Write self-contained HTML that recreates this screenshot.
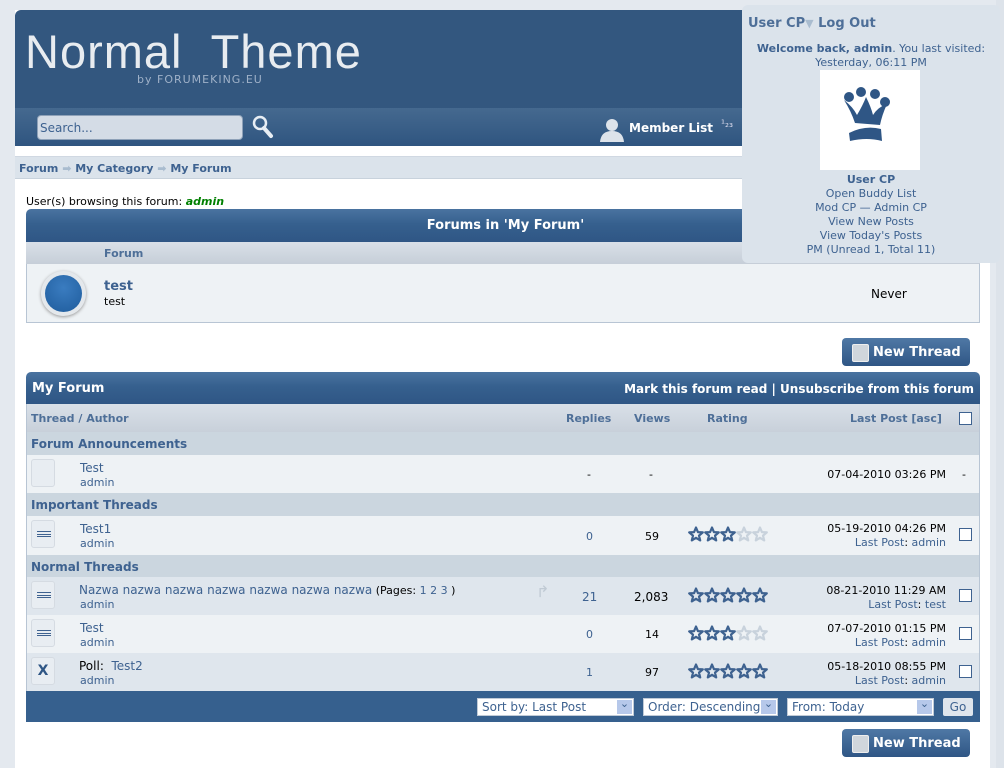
<!DOCTYPE html>
<html style="overflow:hidden;width:1004px;height:768px"><head><meta charset="utf-8"><style>
*{box-sizing:border-box;margin:0;padding:0}
body{width:1004px;height:768px;overflow:hidden;background:#e4e9ef;font-family:Verdana,"DejaVu Sans",sans-serif;font-size:11px;color:#000;position:relative}
.a{position:absolute}
.lnk{color:#3e6290}
.b{font-weight:bold}
.hdr{background:linear-gradient(#4a73a0,#36608e 45%,#2f5685);color:#fff;font-weight:bold;font-size:13px}
.cb{width:13px;height:13px;border:1px solid #3e6290;background:#fff}
.icon{width:24px;height:28px;border:1px solid #d5dbe2;border-radius:3px;background:#e8edf2}
.lines{position:absolute;left:5px;top:10px;width:14px;height:6px;border-top:1px solid #3e6290;border-bottom:1px solid #3e6290}
.lines:after{content:"";position:absolute;left:0;top:2px;width:14px;border-top:1px solid #3e6290}
.btn{width:128px;height:28px;border-radius:4px;background:linear-gradient(#4f78a5,#2f5685);color:#fff;font-weight:bold;font-size:13px;line-height:28px;padding-left:31px}
.btn:before{content:"";position:absolute;left:10px;top:6px;width:15px;height:16px;border-radius:2px;background:#d0d6dc;border:1px solid #eee}
.sel{height:18px;background:#fff;border:1px solid #c0cad6;color:#3e6290;font-size:12px;line-height:16px;padding-left:4px}
.sel:after{content:"⌄";position:absolute;right:1px;top:1px;width:15px;height:14px;background:#b6c8ea;color:#3e6290;font-size:11px;line-height:8px;text-align:center}
</style></head><body>
<svg width="0" height="0" style="position:absolute"><defs><path id="st" d="M8 1.5 L9.9 6.1 L14.8 6.4 L11 9.6 L12.2 14.4 L8 11.8 L3.8 14.4 L5 9.6 L1.2 6.4 L6.1 6.1Z" fill="none" stroke-width="2.2" stroke-linejoin="round"/></defs></svg>
<div class="a" style="left:10px;top:5px;width:986px;height:763px;background:#e4e9ef;border-radius:8px"></div>
<div class="a" style="left:15px;top:10px;width:975px;height:758px;background:#fff"></div>
<div class="a" style="left:996px;top:0;width:8px;height:768px;background:#dde3ea"></div>
<div class="a" style="left:15px;top:10px;width:975px;height:98px;background:#33577f;border-radius:6px 6px 0 0"></div>
<div class="a" style="left:25px;top:26px;font-family:'Liberation Sans',sans-serif;font-size:47px;color:#e8ecf0;letter-spacing:1px;line-height:52px">Normal&nbsp;&nbsp;Theme</div>
<div class="a" style="left:137px;top:73px;font-size:11px;color:#9fb1c8;letter-spacing:1px">by FORUMEKING.EU</div>
<div class="a" style="left:15px;top:108px;width:975px;height:38px;background:linear-gradient(#45698f,#2f5580)"></div>
<div class="a" style="left:37px;top:115px;width:206px;height:25px;border-radius:4px;background:#d4dce6;border:1px solid #8ea1b8;color:#3e6290;font-size:12px;padding:5px 0 0 2px">Search...</div>
<svg class="a" style="left:252px;top:114px" width="22" height="26"><circle cx="8" cy="9" r="6" fill="none" stroke="#e8eef4" stroke-width="2.5"/><path d="M12 14 L19 22" stroke="#e8eef4" stroke-width="4" stroke-linecap="round"/></svg>
<svg class="a" style="left:599px;top:118px" width="26" height="24"><circle cx="13" cy="7" r="6" fill="#dde3ea"/><path d="M1 24 Q2 13 13 13 Q24 13 25 24Z" fill="#dde3ea"/></svg>
<div class="a b" style="left:629px;top:121px;color:#fff;font-size:12px">Member List</div>
<div class="a" style="left:721px;top:119px;color:#dde;font-size:10px">¹₂₃</div>
<div class="a" style="left:15px;top:146px;width:975px;height:11px;background:#fff;border-bottom:1px solid #d0d8e2"></div>
<div class="a" style="left:15px;top:157px;width:975px;height:22px;background:#dbe3eb;border-bottom:1px solid #c8d2dc"></div>
<div class="a b" style="left:19px;top:162px;color:#3e6290;font-size:11px">Forum <span style="color:#a9bccf">➡</span> My Category <span style="color:#a9bccf">➡</span> My Forum</div>
<div class="a" style="left:26px;top:195px">User(s) browsing this forum: <b style="color:#008000;font-style:italic">admin</b></div>
<div class="a hdr" style="left:26px;top:209px;width:954px;height:33px;border-radius:5px 5px 0 0;text-align:center;line-height:33px;padding-left:5px">Forums in 'My Forum'</div>
<div class="a b" style="left:26px;top:242px;width:954px;height:22px;background:linear-gradient(#d9e0e8,#c6ced8);color:#4e6f98;padding:5px 0 0 78px">Forum</div>
<div class="a" style="left:26px;top:264px;width:954px;height:59px;background:#eef2f5;border:1px solid #b8c5d4;border-top:0"></div>
<div class="a" style="left:41px;top:271px;width:45px;height:45px;border-radius:50%;background:#e4e8ec;box-shadow:0 1px 3px #999"></div>
<div class="a" style="left:45px;top:275px;width:37px;height:37px;border-radius:50%;background:radial-gradient(circle at 50% 35%,#3a7cc0,#1f5c9c)"></div>
<div class="a b" style="left:104px;top:279px;color:#3e6290;font-size:13px">test</div>
<div class="a" style="left:104px;top:295px">test</div>
<div class="a" style="left:871px;top:287px;font-size:12px">Never</div>
<div class="a btn" style="left:842px;top:338px;line-height:30px">New Thread</div>
<div class="a hdr" style="left:26px;top:372px;width:954px;height:32px;border-radius:5px 5px 0 0"></div>
<div class="a b" style="left:32px;top:381px;color:#fff;font-size:13px">My Forum</div>
<div class="a b" style="right:30px;top:382px;color:#fff;font-size:12px">Mark this forum read | Unsubscribe from this forum</div>
<div class="a" style="left:26px;top:404px;width:954px;height:287px;border-left:1px solid #b8c5d4;border-right:1px solid #b8c5d4"></div>
<div class="a" style="left:27px;top:404px;width:952px;height:28px;background:linear-gradient(#d9e0e8,#c8d0da)"></div>
<div class="a b" style="left:31px;top:412px;color:#4e6f98">Thread / Author</div>
<div class="a b" style="left:566px;top:412px;color:#4e6f98">Replies</div>
<div class="a b" style="left:634px;top:412px;color:#4e6f98">Views</div>
<div class="a b" style="left:707px;top:412px;color:#4e6f98">Rating</div>
<div class="a b" style="left:850px;top:412px;color:#4e6f98">Last Post [asc]</div>
<div class="a cb" style="left:959px;top:412px"></div>

<div class="a b" style="left:27px;top:432px;width:952px;height:23px;background:#cbd6df;color:#3e6290;font-size:12px;padding:5px 0 0 4px">Forum Announcements</div>
<div class="a" style="left:27px;top:455px;width:952px;height:38px;background:#eef2f5"></div>
<div class="a icon" style="left:31px;top:459px"></div>
<div class="a lnk" style="left:80px;top:461px;font-size:12px">Test</div>
<div class="a lnk" style="left:80px;top:476px">admin</div>
<div class="a" style="left:587px;top:468px">-</div>
<div class="a" style="left:649px;top:468px">-</div>
<div class="a" style="right:58px;top:468px">07-04-2010 03:26 PM</div>
<div class="a" style="left:962px;top:468px">-</div>

<div class="a b" style="left:27px;top:493px;width:952px;height:23px;background:#cbd6df;color:#3e6290;font-size:12px;padding:5px 0 0 4px">Important Threads</div>
<div class="a" style="left:27px;top:516px;width:952px;height:39px;background:#eef2f5"></div>
<div class="a icon" style="left:31px;top:520px"><div class="lines"></div></div>
<div class="a lnk" style="left:80px;top:522px;font-size:12px">Test1</div>
<div class="a lnk" style="left:80px;top:537px">admin</div>
<div class="a lnk" style="left:586px;top:530px">0</div>
<div class="a" style="left:645px;top:530px">59</div>
<svg class="a" style="left:688px;top:526px" width="82" height="17"><g stroke="#3e6290"><use href="#st"/><use href="#st" x="16"/><use href="#st" x="32"/></g><g stroke="#c8d2dc"><use href="#st" x="48"/><use href="#st" x="64"/></g></svg>
<div class="a" style="right:58px;top:522px">05-19-2010 04:26 PM</div>
<div class="a" style="right:58px;top:536px"><span class="lnk">Last Post</span>: <span class="lnk">admin</span></div>
<div class="a cb" style="left:959px;top:528px"></div>

<div class="a b" style="left:27px;top:555px;width:952px;height:22px;background:#cbd6df;color:#3e6290;font-size:12px;padding:5px 0 0 4px">Normal Threads</div>
<div class="a" style="left:27px;top:577px;width:952px;height:38px;background:#dfe6ed"></div>
<div class="a icon" style="left:31px;top:581px"><div class="lines"></div></div>
<div class="a" style="left:79px;top:583px"><span class="lnk" style="font-size:12px">Nazwa nazwa nazwa nazwa nazwa nazwa nazwa</span> (Pages: <span class="lnk">1 2 3</span> )</div>
<div class="a lnk" style="left:80px;top:598px">admin</div>
<div class="a" style="left:536px;top:582px;color:#c0cad4;font-size:16px">↱</div>
<div class="a lnk" style="left:582px;top:590px;font-size:12px">21</div>
<div class="a" style="left:634px;top:590px;font-size:12px">2,083</div>
<svg class="a" style="left:688px;top:587px" width="82" height="17"><g stroke="#3e6290"><use href="#st"/><use href="#st" x="16"/><use href="#st" x="32"/><use href="#st" x="48"/><use href="#st" x="64"/></g></svg>
<div class="a" style="right:58px;top:584px">08-21-2010 11:29 AM</div>
<div class="a" style="right:58px;top:598px"><span class="lnk">Last Post</span>: <span class="lnk">test</span></div>
<div class="a cb" style="left:959px;top:589px"></div>

<div class="a" style="left:27px;top:615px;width:952px;height:38px;background:#eef2f5"></div>
<div class="a icon" style="left:31px;top:619px"><div class="lines"></div></div>
<div class="a lnk" style="left:80px;top:621px;font-size:12px">Test</div>
<div class="a lnk" style="left:80px;top:636px">admin</div>
<div class="a lnk" style="left:586px;top:628px">0</div>
<div class="a" style="left:645px;top:628px">14</div>
<svg class="a" style="left:688px;top:625px" width="82" height="17"><g stroke="#3e6290"><use href="#st"/><use href="#st" x="16"/><use href="#st" x="32"/></g><g stroke="#c8d2dc"><use href="#st" x="48"/><use href="#st" x="64"/></g></svg>
<div class="a" style="right:58px;top:622px">07-07-2010 01:15 PM</div>
<div class="a" style="right:58px;top:636px"><span class="lnk">Last Post</span>: <span class="lnk">admin</span></div>
<div class="a cb" style="left:959px;top:627px"></div>

<div class="a" style="left:27px;top:653px;width:952px;height:38px;background:#dfe6ed"></div>
<div class="a icon" style="left:31px;top:657px;text-align:center;font-weight:bold;color:#2f5685;font-size:14px;line-height:26px">X</div>
<div class="a" style="left:79px;top:659px;font-size:12px">Poll: <span class="lnk">&nbsp;Test2</span></div>
<div class="a lnk" style="left:80px;top:674px">admin</div>
<div class="a lnk" style="left:586px;top:666px">1</div>
<div class="a" style="left:645px;top:666px">97</div>
<svg class="a" style="left:688px;top:663px" width="82" height="17"><g stroke="#3e6290"><use href="#st"/><use href="#st" x="16"/><use href="#st" x="32"/><use href="#st" x="48"/><use href="#st" x="64"/></g></svg>
<div class="a" style="right:58px;top:660px">05-18-2010 08:55 PM</div>
<div class="a" style="right:58px;top:674px"><span class="lnk">Last Post</span>: <span class="lnk">admin</span></div>
<div class="a cb" style="left:959px;top:665px"></div>

<div class="a" style="left:26px;top:691px;width:954px;height:31px;background:#36608e"></div>
<div class="a sel" style="left:477px;top:698px;width:157px">Sort by: Last Post</div>
<div class="a sel" style="left:643px;top:698px;width:135px">Order: Descending</div>
<div class="a sel" style="left:787px;top:698px;width:147px">From: Today</div>
<div class="a" style="left:943px;top:698px;width:30px;height:18px;background:#dfe5ec;border-radius:2px;color:#3e6290;font-size:12px;text-align:center;line-height:18px">Go</div>
<div class="a btn" style="left:842px;top:729px;line-height:30px">New Thread</div>

<div class="a" style="left:742px;top:5px;width:258px;height:258px;background:#dbe3eb;border-radius:6px"></div>
<div class="a b" style="left:748px;top:16px;color:#4e6f98;font-size:13px">User CP<span style="color:#a9bccf;font-size:11px">▼</span> Log Out</div>
<div class="a" style="left:742px;top:42px;width:258px;text-align:center;color:#3e6290;line-height:14px"><b>Welcome back, admin</b>. You last visited:<br>Yesterday, 06:11 PM</div>
<div class="a" style="left:820px;top:70px;width:100px;height:100px;background:#fff"></div>
<svg class="a" style="left:835px;top:85px" width="64" height="70"><circle cx="14" cy="12" r="5" fill="#2f5685"/><circle cx="26" cy="7" r="5" fill="#2f5685"/><circle cx="40" cy="9" r="5" fill="#2f5685"/><circle cx="50" cy="17" r="5" fill="#2f5685"/><path d="M9 15 Q18 22 22 30 Q28 20 31 12 Q36 22 38 30 Q43 22 52 19 Q47 30 45 40 L20 38 Q16 26 9 15Z" fill="#2f5685"/><path d="M14 48 Q30 40 46 44 L47 56 Q32 52 15 56Z" fill="#2f5685"/></svg>
<div class="a" style="left:742px;top:173px;width:258px;text-align:center;color:#3e6290;line-height:14px"><b>User CP</b><br>Open Buddy List<br>Mod CP — Admin CP<br>View New Posts<br>View Today's Posts<br>PM (Unread 1, Total 11)</div>
</body></html>
